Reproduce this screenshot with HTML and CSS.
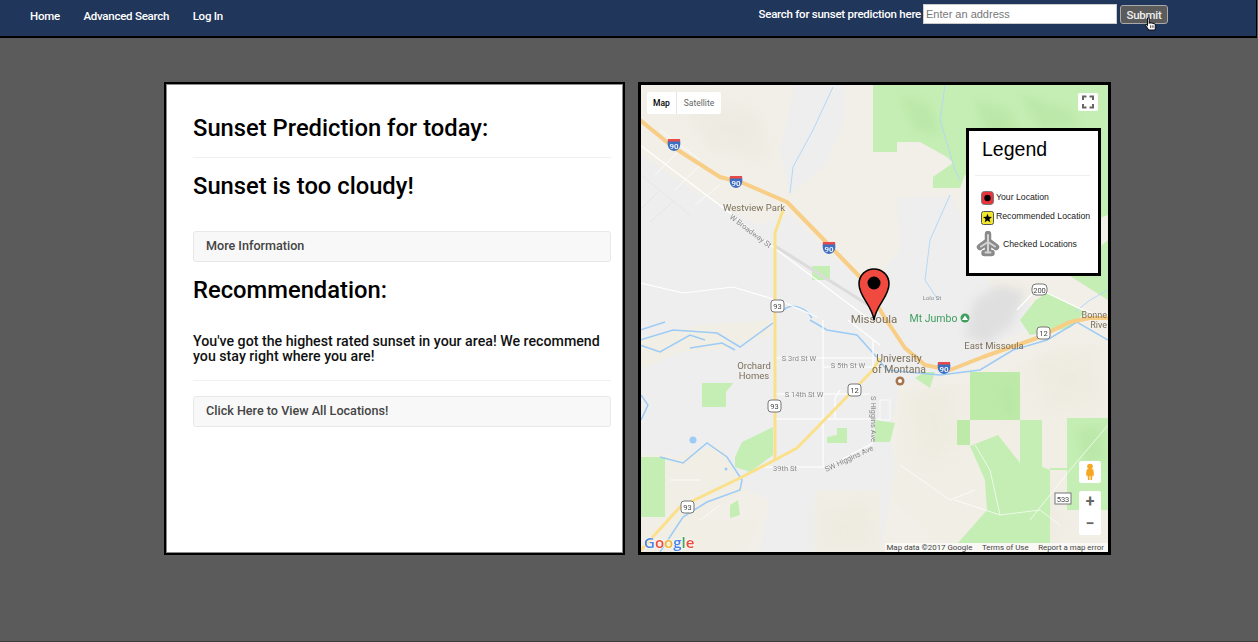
FILE: index.html
```html
<!DOCTYPE html>
<html lang="en">
<head>
  <meta charset="UTF-8">
  <meta name="viewport" content="width=device-width, initial-scale=1.0">
  <title>Sunset Prediction</title>
  <link rel="stylesheet" href="styles.css">
</head>
<body>
  <nav class="navbar">
    <ul class="nav-links">
      <li><a href="#">Home</a></li>
      <li><a href="#">Advanced Search</a></li>
      <li><a href="#">Log In</a></li>
    </ul>
    <form class="search">
      <label for="address">Search for sunset prediction here</label>
      <input id="address" type="text" placeholder="Enter an address">
      <button type="button" class="submit">Submit</button>
      <svg class="cursor" viewBox="0 0 15 16" width="13" height="14">
        <path d="M4 2C4 .8 6 .8 6 2V7L8 6.600L10 7L12 7.600C13 8 13.500 8.800 13.500 10V12L12.500 15H5.500L2 10C1.300 9 2.500 7.800 3.300 8.600L4 9.500Z" fill="#fff" stroke="#111" stroke-width="1.200"/>
        <path d="M7.500 9.500V12.500M9.500 9.500V12.500M11.500 9.500V12.500" fill="none" stroke="#111" stroke-width="0.800"/>
      </svg>
    </form>
  </nav>

  <main class="content">
    <section class="panel info">
      <h2>Sunset Prediction for today:</h2>
      <hr class="rule-first">
      <h2 class="status">Sunset is too cloudy!</h2>
      <a class="well-btn more" href="#">More Information</a>
      <h2 class="rec-title">Recommendation:</h2>
      <p class="rec-text">You've got the highest rated sunset in your area! We recommend you stay right where you are!</p>
      <hr class="rule-second">
      <a class="well-btn" href="#">Click Here to View All Locations!</a>
    </section>

    <section class="panel map">
      <svg class="map-canvas" viewBox="641 85 467 467" width="467" height="467">
        <rect x="641" y="85" width="467" height="467" fill="#f1efe7"/>

        <!-- urban grey -->
        <path class="urban" d="M641 155L700 195L760 225L790 215L830 255L870 285L900 250L897 197H953L990 285L1060 320L1000 340L960 372L900 385L890 430L895 470L880 552L760 552L770 500L700 470L660 450L641 440Z"/>
        <path class="urban" d="M641 290L700 285L780 305L770 452L742 440L700 440L660 455L641 455Z"/>
        <path class="urban" d="M795 85L845 85L845 120L825 165L790 195L780 150Z"/>
        <path class="mountain" d="M975 300L1000 285L1025 292L1012 325L985 345L965 335Z"/>
        <path class="foothill" d="M815 490H880V552H815Z"/>
        <path class="foothill" d="M1108 345L1060 345L990 380L900 392L892 500L950 552H1108Z"/>
        <path class="foothill" d="M640 340L700 325L770 320L770 335L720 350L680 352L640 370Z"/>
        <path class="foothill" d="M665 460L720 445L745 490L700 520L760 520L745 552H641V520L665 515Z"/>
        <g class="terrain">
          <path d="M905 400L950 385L960 440L925 470Z"/>
          <path d="M1030 360L1090 350L1100 400L1050 410Z"/>
          <path d="M1000 500L1050 480L1060 540L990 545Z"/>
          <path d="M820 510L870 500L875 545L825 548Z"/>
          <path d="M680 100L760 110L770 160L710 150Z"/>
        </g>

        <!-- parks -->
        <path class="park" d="M873 85V152H897V142H920L947 157L953 163L933 177V188H960L965 175H1000L1040 240L1108 215V85Z"/>
        <path class="park" d="M1090 255L1108 240V300L1070 276Z"/>
        <path class="park" d="M1036 300L1047 293L1085 312L1070 328L1030 335L1020 320Z"/>
        <path class="park-dark" d="M970 372H1020V420H970Z"/>
        <path class="park-dark" d="M957 420H970V445H957Z"/>
        <path class="park" d="M1020 420H1042V467L1050 470V543H958L987 510L985 480L970 446L998 435L1020 463Z"/>
        <path class="park" d="M1067 418H1108V510H1067V470H1050V468H1067Z"/>
        <path class="park" d="M875 420L895 423L890 442H875Z"/>
        <path class="park" d="M702 383H733L726 392V407H702Z"/>
        <path class="park" d="M640 457H665V517H640Z"/>
        <path class="park" d="M742 442L773 427V455L750 472L735 467V457Z"/>
        <path class="park" d="M827 437L837 435V428H847V443H827Z"/>
        <path class="park" d="M812 266H830V280H812Z"/>
        <path class="park" d="M925 372L935 372L930 388L915 378Z"/>
        <path class="park" d="M730 505L738 500L740 515L730 518Z"/>
        <g class="shade">
          <path d="M900 95L930 105L940 135L915 130Z"/>
          <path d="M975 100L1010 110L1030 160L990 150Z"/>
          <path d="M1020 95L1070 110L1080 125L1040 130Z"/>
          <path d="M1000 385L1012 385L1015 415L1005 415Z"/>
          <path d="M1075 430L1100 425L1105 460L1085 465Z"/>
        </g>

        <!-- rivers -->
        <g class="river">
          <path d="M640 340L673 330L717 333L740 347L773 323"/>
          <path d="M640 345L660 352L690 335L705 340M690 348L722 343L735 350M640 330L665 322"/>
          <path d="M641 420L648 405L641 395"/>
          <path d="M660 457L683 463L707 443L727 457L742 480L740 490L707 502L683 517L660 552"/>
          <path d="M810 320L827 330L857 335L873 353L887 370L940 375L980 370L1013 350L1047 340L1077 322L1108 340"/>
          <path d="M784 310C790 303 805 306 812 318" stroke-width="4"/>
          <path class="creek" d="M833 87L813 130L793 167L790 193"/>
          <path class="creek" d="M950 195L930 240L925 280L938 300"/>
          <path class="creek" d="M945 85L940 120L955 170L960 180"/>
          <path class="creek" d="M1108 290L1090 300L1075 312"/>
        </g>
        <circle cx="693" cy="440" r="3.500" fill="#9ccbf5"/>
        <circle cx="726" cy="469" r="1.500" fill="#9ccbf5"/>

        <!-- streets -->
        <g class="street">
          <path d="M640 145L730 213L773 247L870 320"/>
          <path d="M640 283L683 293L733 287L783 302L817 317"/>
          <path d="M823 320V467M775 358H885M823 367H880M775 394H870M775 419H880M763 467H827L873 443"/>
          <path class="thin" d="M660 130L700 160M680 150L655 175M700 165L675 190M720 185L695 205"/>
          <path d="M840 390L835 398V419M873 340V370M848 320L880 345"/>
          <path d="M1017 310L1033 293H1047L1083 310L1108 318"/>
          <path class="thin" d="M880 400H890V420H880Z"/>
          <path class="thin" d="M955 500L1000 515L1040 510L1060 525M1000 515L990 470L975 445M1030 520L1070 470L1108 425"/>
          <path class="thin" d="M670 480H700M700 520L720 505M900 465L950 500L975 490"/>
        </g>
        <path d="M775 246L873 308" fill="none" stroke="#dcdcdc" stroke-width="3"/>
        <path d="M641 175L690 215M660 190L640 210M675 200L650 222" fill="none" stroke="#e6e6e6" stroke-width="1"/>

        <!-- highways -->
        <path class="hwy-93" d="M640 551L680 507L740 478L775 460L797 448L837 407L873 370L880 358"/>
        <path class="hwy-93" d="M775 460V233L783 210"/>
        <path class="hwy-90" d="M640 120L673 147L720 177L743 183L787 202L827 243L860 277L885 318L905 348L925 365L950 370L983 357L1037 338L1070 322L1090 318L1108 318"/>

        <!-- interstate shields -->
        <g class="shield-i">
          <path d="M668 139H680C681 146 680 150 674 151C668 150 667 146 668 139Z" fill="#3f6fc0"/><path d="M668 139H680V141.500H668Z" fill="#e84a4a"/><text x="674" y="149">90</text>
          <path d="M730 176H742C743 183 742 187 736 188C730 187 729 183 730 176Z" fill="#3f6fc0"/><path d="M730 176H742V178.500H730Z" fill="#e84a4a"/><text x="736" y="186">90</text>
          <path d="M823 242H835C836 249 835 253 829 254C823 253 822 249 823 242Z" fill="#3f6fc0"/><path d="M823 242H835V244.500H823Z" fill="#e84a4a"/><text x="829" y="252">90</text>
          <path d="M938 362H950C951 369 950 373 944 374C938 373 937 369 938 362Z" fill="#3f6fc0"/><path d="M938 362H950V364.500H938Z" fill="#e84a4a"/><text x="944" y="372">90</text>
        </g>
        <!-- US route shields -->
        <g class="shield-us">
          <rect x="771" y="300" width="13" height="12" rx="3"/><text x="777.500" y="309">93</text>
          <rect x="768" y="400" width="13" height="12" rx="3"/><text x="774.500" y="409">93</text>
          <rect x="681" y="501" width="13" height="12" rx="3"/><text x="687.500" y="510">93</text>
          <rect x="848" y="384" width="13" height="12" rx="3"/><text x="854.500" y="393">12</text>
          <rect x="1037" y="327" width="13" height="12" rx="3"/><text x="1043.500" y="336">12</text>
          <rect x="1032" y="284" width="15" height="11" rx="4"/><text x="1039.500" y="292.500">200</text>
          <rect x="1055" y="493" width="16" height="11"/><text x="1063" y="501.500">533</text>
        </g>

        <!-- labels -->
        <g class="label">
          <text x="754" y="211" font-size="9.500">Westview Park</text>
          <text x="754" y="369" font-size="9.500">Orchard</text>
          <text x="754" y="379" font-size="9.500">Homes</text>
          <text x="874" y="322.500" font-size="11.500">Missoula</text>
          <text x="899" y="362" font-size="10.500">University</text>
          <text x="899" y="372.500" font-size="10.500">of Montana</text>
          <text x="994" y="349" font-size="9.500">East Missoula</text>
          <text x="1107" y="318" font-size="9" class="edge">Bonne</text>
          <text x="1107" y="328" font-size="9" class="edge">Rive</text>
          <text x="932" y="300" class="road small">Lolo St</text>
          <text x="799" y="361" class="road">S 3rd St W</text>
          <text x="848" y="368" class="road">S 5th St W</text>
          <text x="804" y="396.500" class="road">S 14th St W</text>
          <text x="785" y="471" class="road">39th St</text>
          <text class="road" transform="translate(749 233) rotate(37)">W Broadway St</text>
          <text class="road" transform="translate(850 461) rotate(-25)">SW Higgins Ave</text>
          <text class="road" transform="translate(871 419) rotate(90)">S Higgins Ave</text>
          <text x="933.500" y="322" font-size="10.500" class="park-label">Mt Jumbo</text>
        </g>
        <circle cx="965" cy="318" r="4.500" fill="#3f9f5f"/>
        <path d="M962 320L965 315.500L968 320Z" fill="#fff"/>
        <circle cx="900" cy="381" r="4.500" fill="#a6744a"/>
        <circle cx="900" cy="381" r="2" fill="#fff"/>

        <!-- pin -->
        <path d="M874 320C872 305 859 297 859 284C859 275 866 269 874 269C882 269 889 275 889 284C889 297 876 305 874 320Z" fill="#f0493f" stroke="#000" stroke-width="1.500"/>
        <circle cx="874" cy="283" r="6.500" fill="#000"/>

        <text class="google" x="644" y="548"><tspan fill="#4c84e8">G</tspan><tspan fill="#ea4c40">o</tspan><tspan fill="#f4b830">o</tspan><tspan fill="#4c84e8">g</tspan><tspan fill="#3fa757">l</tspan><tspan fill="#ea4c40">e</tspan></text>
      </svg>

      <div class="map-type">
        <span class="map-type-on">Map</span>
        <span class="map-type-off">Satellite</span>
      </div>

      <button class="map-btn fullscreen" type="button">
        <svg viewBox="0 0 20 18" width="20" height="18">
          <path d="M5 7V3.500H8.500M11.500 3.500H15V7M15 11V14.500H11.500M8.500 14.500H5V11" fill="none" stroke="#666" stroke-width="2"/>
        </svg>
      </button>

      <button class="map-btn pegman" type="button">
        <svg viewBox="0 0 22 22" width="22" height="22">
          <circle cx="11" cy="5.500" r="2.800" fill="#f5a623"/>
          <path d="M7.500 9.500C7.500 8.500 8.500 8 9.500 8H12.500C13.500 8 14.500 8.500 14.500 9.500L15 14.500H13.500L13 19H11.500V15H10.500V19H9L8.500 14.500H7Z" fill="#f5a623"/>
        </svg>
      </button>

      <div class="zoom-box">
        <button type="button" class="zoom-btn">+</button>
        <button type="button" class="zoom-btn">−</button>
      </div>

      <div class="map-footer">
        <span>Map data ©2017 Google</span>
        <span>Terms of Use</span>
        <span>Report a map error</span>
      </div>

      <aside class="legend">
        <h3>Legend</h3>
        <hr>
        <div class="legend-item your">
          <svg viewBox="0 0 13 14" width="13" height="14"><rect x="0.500" y="0.500" width="12" height="13" rx="3" fill="#e9353a" stroke="#777"/><circle cx="6.500" cy="7" r="3.200" fill="#000"/></svg>
          <span>Your Location</span>
        </div>
        <div class="legend-item rec">
          <svg viewBox="0 0 13 14" width="13" height="14"><rect x="0.500" y="0.500" width="12" height="13" rx="2" fill="#f2e62c" stroke="#555"/><path d="M6.500 2.800L7.700 5.800L11 6L8.400 8L9.300 11.200L6.500 9.400L3.700 11.200L4.600 8L2 6L5.300 5.800Z" fill="#000"/></svg>
          <span>Recommended Location</span>
        </div>
        <div class="legend-item checked">
          <svg viewBox="0 0 24 26" width="24" height="26">
            <path d="M12 3V21M4 16L12 10L20 16M8.500 22H15.500" fill="none" stroke="#8a8a8a" stroke-width="6.500" stroke-linecap="round" stroke-linejoin="round"/>
            <path d="M12 4V20M5 15.500L12 11L19 15.500M9.500 21.500H14.500" fill="none" stroke="#d4d4d4" stroke-width="2" stroke-linecap="round" stroke-linejoin="round"/>
          </svg>
          <span>Checked Locations</span>
        </div>
      </aside>
    </section>
  </main>
</body>
</html>
```

FILE: styles.css
```css
* { box-sizing: border-box; }
html, body { height: 100%; }
body { margin: 0; height: 642px; overflow: hidden; background-color: #5b5b5b; border-bottom: 1px solid #3c3c3c; font-family: Roboto, sans-serif; }

.navbar { display: flex; justify-content: space-between; align-items: center; width: 1257px; height: 38px; padding: 0 88px 8px 30px; background: #20365a; border-bottom: 2px solid #000; border-right: 1px solid #000; }
.nav-links { display: flex; gap: 23.500px; list-style-type: none; margin: 0; padding: 0; }
.nav-links a { color: white; text-decoration: none; font-size: 11.500px; font-weight: 500; letter-spacing: -0.250px; }
.search { position: relative; display: flex; align-items: center; }
.search label { color: white; font-size: 11.500px; font-weight: 500; letter-spacing: -0.250px; margin-right: 2px; }
.search input { width: 194px; height: 20px; padding: 0 2px; border: 1px solid #ccc; background: white; font-family: "Liberation Sans", sans-serif; font-size: 11px; }
.search input::placeholder { color: #777; }
.submit { width: 48px; height: 19px; margin: 1px 0 0 3px; padding: 0; color: #eee; background: #5b5b5b; border: 1px solid #aaa; border-radius: 3px; font-family: Roboto, sans-serif; font-size: 11.500px; font-weight: 500; letter-spacing: -0.250px; }
.cursor { position: absolute; right: 11px; top: 13px; }

.content { display: flex; gap: 13px; padding: 44px 0 0 164px; }
.panel { height: 473px; background: white; border: 3px solid #000; }
.info { width: 461px; padding: 31px 12px 0 27px; border-width: 2px; box-shadow: inset 0 0 0 1px #8a8a8a; }
.map { position: relative; width: 473px; overflow: hidden; }

h2 { margin: 0; font-size: 23.750px; line-height: 26px; font-weight: 500; color: #000; }
hr { height: 1px; margin: 0; border: 0; background: #f0f0f0; }
.rule-first { margin: 16px 0 15px; }
.more { margin: 32px 0 15px; }
.rec-text { margin: 31px 0 16px; font-size: 14.200px; line-height: 15px; font-weight: 500; color: #111; }
.rule-second { margin: 0 0 15px; }
.well-btn { display: block; height: 31px; padding: 0 12px; line-height: 28px; color: #444; background: #f8f8f8; border: 1px solid #e8e8e8; border-radius: 3px; font-size: 12.600px; font-weight: 500; text-decoration: none; }

.map-canvas { display: block; filter: blur(0.5px); font-family: Roboto, sans-serif; }
.urban { fill: #eeeeee; }
.mountain { fill: #dfdfdf; filter: blur(5px); }
.foothill { fill: #f1eee5; }
.terrain path { fill: #ece9de; opacity: 0.6; filter: blur(8px); }
.park { fill: #c4eeb3; }
.park-dark { fill: #bdeaa9; }
.shade path { fill: #b3e3a1; opacity: 0.5; filter: blur(4px); }
.river path { fill: none; stroke: #9ccbf5; stroke-width: 1.500; }
.river .creek { stroke: #b5d8f5; stroke-width: 1; }
.street path { fill: none; stroke: #fff; stroke-width: 1.200; }
.street .thin { stroke-width: 0.700; }
.hwy-90 { fill: none; stroke: #f8cd85; stroke-width: 4; stroke-linejoin: round; }
.hwy-93 { fill: none; stroke: #fbe08a; stroke-width: 3; stroke-linejoin: round; }
.shield-i text { font-size: 8px; fill: white; text-anchor: middle; font-weight: 500; }
.shield-us rect { fill: white; stroke: #777; stroke-width: 1; }
.shield-us text { font-size: 7.500px; fill: #444; text-anchor: middle; }
.label text { fill: #7c705c; text-anchor: middle; }
.label .road { fill: #8a8a8a; font-size: 7.500px; }
.label .small { font-size: 6px; }
.label .edge { text-anchor: end; }
.label .park-label { fill: #3f9f5f; }
.google { font-size: 15px; font-weight: 600; font-family: "Open Sans", sans-serif; stroke: rgba(255,255,255,0.6); stroke-width: 1.500; paint-order: stroke; }

.map-type { position: absolute; left: 6px; top: 7px; display: flex; height: 22px; background: white; border-radius: 2px; font-size: 8.500px; line-height: 22px; }
.map-type-on { width: 30px; text-align: center; color: #000; font-weight: 500; border-right: 1px solid #e6e6e6; }
.map-type-off { width: 44px; text-align: center; color: #666; }
.map-btn { position: absolute; padding: 0; background: white; border: 0; border-radius: 2px; display: flex; align-items: center; justify-content: center; }
.fullscreen { left: 437px; top: 8px; width: 20px; height: 18px; }
.pegman { left: 438px; top: 376px; width: 22px; height: 22px; }
.zoom-box { position: absolute; left: 438px; top: 406px; display: flex; flex-direction: column; width: 22px; background: white; border-radius: 2px; }
.zoom-btn { height: 22px; padding: 0; background: none; border: 0; color: #666; font-family: Roboto, sans-serif; font-size: 16px; font-weight: 700; line-height: 22px; }
.map-footer { position: absolute; right: 0; bottom: 0; display: flex; gap: 9.500px; height: 9px; padding: 0 4px 0 1px; background: rgba(255,255,255,0.6); color: #444; font-size: 7.900px; line-height: 9px; white-space: nowrap; }

.legend { position: absolute; left: 325px; top: 43px; width: 135px; height: 148px; padding: 0 8px 0 6px; background: white; border: 3px solid #000; font-family: "Liberation Sans", sans-serif; }
.legend h3 { margin: 6px 0 14px 7px; font-size: 19.500px; line-height: 24px; font-weight: 400; color: #000; }
.legend-item { display: flex; align-items: center; font-size: 8.700px; color: #222; white-space: nowrap; }
.legend-item svg { flex: none; }
.your { margin: 14px 0 0 6px; }
.rec { margin: 5px 0 0 6px; }
.your svg { transform: translateY(1px); }
.rec svg { transform: translateY(2px); }
.your span, .rec span { margin-left: 2px; }
.checked { margin: 8px 0 0 1px; }
.checked svg { filter: blur(0.5px); }
.checked span { margin-left: 3px; }
```
